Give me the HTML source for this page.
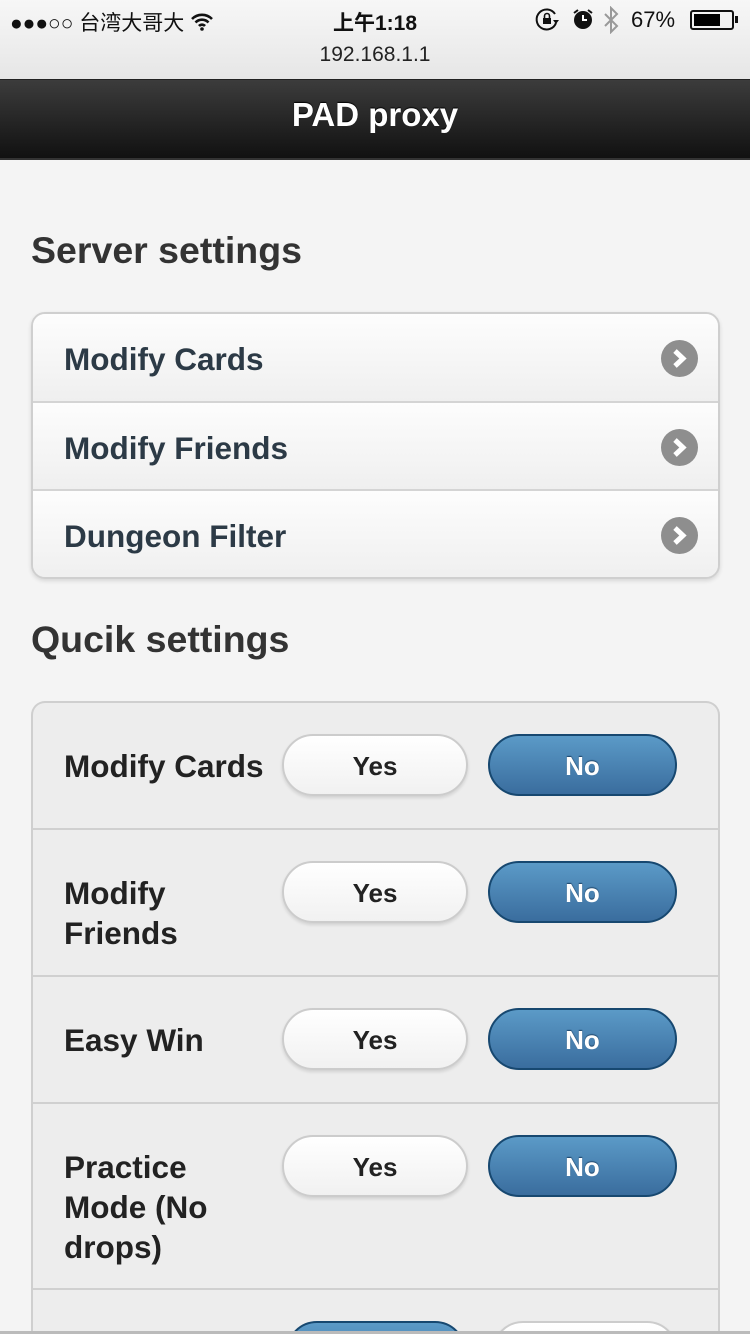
<!DOCTYPE html>
<html style="overflow:hidden;height:1334px"><head><meta charset="utf-8"><style>
*{margin:0;padding:0;box-sizing:border-box}
body{width:750px;height:1334px;overflow:hidden;background:#f4f4f4;font-family:"Liberation Sans","Noto Sans CJK SC",sans-serif;position:relative}
.abs{position:absolute}
#top{left:0;top:0;width:750px;height:79px;background:linear-gradient(#f7f7f7,#e6e6e6);}
#hdr{left:0;top:79px;width:750px;height:81px;background:linear-gradient(#3c3c3c,#111);border-top:1px solid #222;border-bottom:2px solid #333}
#hdr div{color:#fff;font-weight:bold;font-size:33px;text-align:center;line-height:70px;text-shadow:0 -1px 1px #000}
h2{position:absolute;left:31px;font-size:37.5px;color:#333;font-weight:bold}
.list{position:absolute;left:31px;width:689px;border:2px solid #cfcfcf;border-radius:14px;overflow:hidden;box-shadow:0 2px 4px rgba(0,0,0,.12)}
.li{height:88.5px;border-bottom:2px solid #d4d4d4;background:linear-gradient(#fdfdfd,#efefef);position:relative}
.li:last-child{border-bottom:none}
.li span{position:absolute;left:31px;top:27px;font-size:31.5px;font-weight:bold;color:#2c3a46}
.chev{position:absolute;right:20px;top:26px;width:37px;height:37px;border-radius:50%;background:#8e8e8e}
.q{position:absolute;left:31px;width:689px;top:701px;height:632px;border:2px solid #cfcfcf;border-bottom:none;border-radius:14px 14px 0 0;background:#ededed;overflow:hidden}
.row{position:absolute;left:0;width:685px;border-bottom:2px solid #d0d0d0}
.row .l{position:absolute;left:31px;font-size:31.5px;font-weight:bold;color:#222;line-height:40px;width:190px}
.btn{position:absolute;width:186px;height:62px;border-radius:31px;font-size:26px;font-weight:bold;text-align:center;line-height:60px}
.y{left:249px;background:linear-gradient(#fff,#f1f1f1);border:2px solid #ccc;color:#222;box-shadow:0 2px 3px rgba(0,0,0,.12)}
.n{left:455px;width:189px;background:linear-gradient(#5b9ac7,#3a6d9e);border:2px solid #174870;color:#fff;text-shadow:0 -1px 1px #1d4468}
</style></head><body>
<div id="top" class="abs">
 <div class="abs" style="left:10px;top:7px;font-size:21px;color:#111">●●●○○ 台湾大哥大
  <svg width="24" height="20" viewBox="0 0 24 20" style="vertical-align:-2px"><path d="M2 7a14 14 0 0 1 20 0M5.5 10.5a9 9 0 0 1 13 0M9 14a4 4 0 0 1 6 0" stroke="#111" stroke-width="2.6" fill="none"/><circle cx="12" cy="17" r="1.8" fill="#111"/></svg></div>
 <div class="abs" style="left:0;width:750px;top:7px;text-align:center;font-size:21px;font-weight:bold;color:#111">上午1:18</div>
 <div class="abs" style="left:0;width:750px;top:43px;text-align:center;font-size:21px;color:#222">192.168.1.1</div>
 <svg class="abs" style="left:535px;top:8px" width="26" height="24" viewBox="0 0 26 24"><path d="M20 6a10 10 0 1 0 1 9" stroke="#111" stroke-width="2" fill="none"/><path d="M18 12l3 4 3-4z" fill="#111"/><rect x="8" y="10" width="8" height="6" fill="#111"/><path d="M9.5 10V8a2.5 2.5 0 0 1 5 0v2" stroke="#111" stroke-width="1.6" fill="none"/></svg>
 <svg class="abs" style="left:571px;top:7px" width="24" height="24" viewBox="0 0 24 24"><circle cx="12" cy="13" r="9" fill="#111"/><path d="M3 6l4-3M21 6l-4-3" stroke="#111" stroke-width="2"/><path d="M12 8v5h4" stroke="#fff" stroke-width="2" fill="none"/></svg>
 <svg class="abs" style="left:603px;top:6px" width="16" height="28" viewBox="0 0 16 28"><path d="M2 8l12 12-6 6V2l6 6L2 20" stroke="#999" stroke-width="2" fill="none"/></svg>
 <div class="abs" style="left:631px;top:7px;font-size:22px;color:#111">67%</div>
 <div class="abs" style="left:690px;top:10px;width:44px;height:20px;border:2px solid #111;border-radius:3px"><div style="margin:2px;width:26px;height:12px;background:#000"></div></div>
 <div class="abs" style="left:735px;top:16px;width:3px;height:7px;background:#111"></div>
</div>
<div id="hdr" class="abs"><div>PAD proxy</div></div>
<h2 style="top:229px">Server settings</h2>
<div class="list" style="top:312px;height:267px">
 <div class="li"><span>Modify Cards</span><div class="chev"><svg width="37" height="37" viewBox="0 0 37 37"><path d="M14 11l8 7.5-8 7.5" stroke="#fff" stroke-width="5" fill="none"/></svg></div></div>
 <div class="li"><span>Modify Friends</span><div class="chev"><svg width="37" height="37" viewBox="0 0 37 37"><path d="M14 11l8 7.5-8 7.5" stroke="#fff" stroke-width="5" fill="none"/></svg></div></div>
 <div class="li"><span>Dungeon Filter</span><div class="chev"><svg width="37" height="37" viewBox="0 0 37 37"><path d="M14 11l8 7.5-8 7.5" stroke="#fff" stroke-width="5" fill="none"/></svg></div></div>
</div>
<h2 style="top:618px">Qucik settings</h2>
<div class="q">
 <div class="row" style="top:0;height:127px"><div class="l" style="top:43px;width:260px">Modify Cards</div><div class="btn y" style="top:31px">Yes</div><div class="btn n" style="top:31px">No</div></div>
 <div class="row" style="top:127px;height:147px"><div class="l" style="top:43px">Modify Friends</div><div class="btn y" style="top:31px">Yes</div><div class="btn n" style="top:31px">No</div></div>
 <div class="row" style="top:274px;height:127px"><div class="l" style="top:43px">Easy Win</div><div class="btn y" style="top:31px">Yes</div><div class="btn n" style="top:31px">No</div></div>
 <div class="row" style="top:401px;height:186px"><div class="l" style="top:43px">Practice Mode (No drops)</div><div class="btn y" style="top:31px">Yes</div><div class="btn n" style="top:31px">No</div></div>
 <div class="row" style="top:587px;height:45px;border:none"><div class="btn n" style="top:31px;left:253px;width:180px"></div><div class="btn y" style="top:31px;left:459px"></div></div>
</div>
<div class="abs" style="left:0;top:1331px;width:750px;height:3px;background:#bbb"></div>
</body></html>
